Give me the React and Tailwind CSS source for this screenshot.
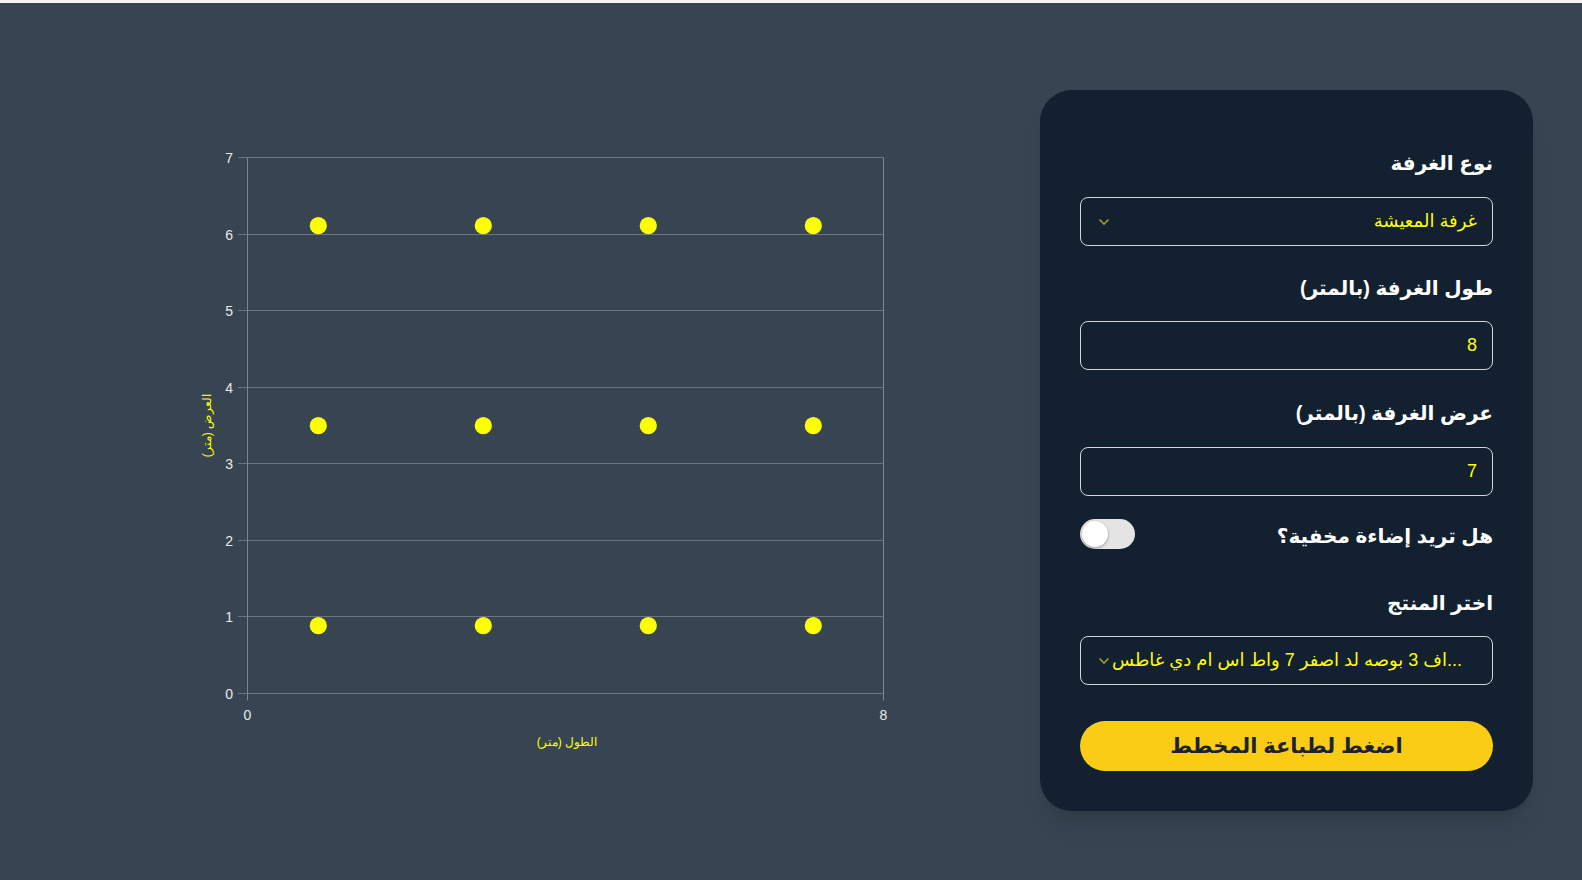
import React from "react";

const plot = { left: 67.5, right: 703.5, top: 27.5, bottom: 563.5 };
const yTicks = [0, 1, 2, 3, 4, 5, 6, 7];
const dotXs = [138.3, 303.3, 468.3, 633.3];
const dotYs = [95.7, 295.7, 495.7];

function yFor(v) {
  return Math.round(plot.bottom - (v * (plot.bottom - plot.top)) / 7 - 0.5) + 0.5;
}

function RoomChart() {
  return (
    <svg width="720" height="640" viewBox="0 0 720 640" className="block shrink-0" style={{ fontFamily: '"Liberation Sans", Arial, sans-serif' }}>
      {/* horizontal grid + y ticks */}
      {yTicks.map(v => (
        <g key={v}>
          <line x1={58} x2={plot.right} y1={yFor(v)} y2={yFor(v)} stroke="#6b7581" strokeWidth="1" />
          <text x={53} y={yFor(v)} textAnchor="end" dominantBaseline="central" fontSize="14" fill="#e8eaed">{v}</text>
        </g>
      ))}
      {/* axes */}
      <line x1={plot.left} x2={plot.left} y1={plot.top} y2={plot.bottom + 7} stroke="#7d868f" strokeWidth="1" />
      <line x1={plot.right} x2={plot.right} y1={plot.top} y2={plot.bottom + 7} stroke="#7d868f" strokeWidth="1" />
      <text x={plot.left} y={585} textAnchor="middle" dominantBaseline="central" fontSize="14" fill="#e8eaed">0</text>
      <text x={plot.right} y={585} textAnchor="middle" dominantBaseline="central" fontSize="14" fill="#e8eaed">8</text>

      {/* axis titles */}
      <text x={387} y={612} textAnchor="middle" dominantBaseline="central" fontSize="12" fill="#ffff00">الطول (متر)</text>
      <text x={27} y={295.5} textAnchor="middle" dominantBaseline="central" fontSize="12" fill="#ffff00" transform="rotate(-90 27 295.5)">العرض (متر)</text>

      {/* light points */}
      {dotYs.map(y => dotXs.map(x => (
        <circle key={`${x}-${y}`} cx={x} cy={y} r="8.6" fill="#ffff00" />
      )))}
    </svg>
  );
}

function Chevron() {
  return (
    <svg width="12" height="8" viewBox="0 0 12 8" className="shrink-0">
      <path d="M1.5 1.5 L6 6 L10.5 1.5" fill="none" stroke="#9aa22c" strokeWidth="1.6" />
    </svg>
  );
}

function Label({ children, className = "" }) {
  return <div className={`text-[20px] leading-7 font-bold text-white ${className}`}>{children}</div>;
}

export default function App() {
  return (
    <div dir="ltr" className="h-[880px] flex flex-col bg-[#374552]" style={{ fontFamily: '"Liberation Sans", "DejaVu Sans", sans-serif' }}>
      <div className="h-[3px] bg-[#f3f3f3] shrink-0" />

      <div className="flex-1 flex items-start">
        <div className="ml-[180px] mt-[127px]">
          <RoomChart />
        </div>

        {/* settings card */}
        <div dir="rtl" className="ml-[140px] mt-[87px] w-[493px] rounded-[32px] bg-[#12202f] shadow-xl px-10 pt-[59px] pb-10">
          <Label>نوع الغرفة</Label>
          <div className="mt-5 h-[49px] rounded-lg border border-[#d4d6d9] flex items-center justify-between pr-[15px] pl-[17px]">
            <span className="text-[18px] text-[#ffff00]">غرفة المعيشة</span>
            <Chevron />
          </div>

          <Label className="mt-7">طول الغرفة (بالمتر)</Label>
          <div className="mt-[19px] h-[49px] rounded-lg border border-[#d4d6d9] flex items-center pr-[15px]">
            <span className="text-[18px] text-[#ffff00]">8</span>
          </div>

          <Label className="mt-[29px]">عرض الغرفة (بالمتر)</Label>
          <div className="mt-5 h-[49px] rounded-lg border border-[#d4d6d9] flex items-center pr-[15px]">
            <span className="text-[18px] text-[#ffff00]">7</span>
          </div>

          <div className="mt-[23px] h-[30px] flex items-center justify-between">
            <Label className="pt-1">هل تريد إضاءة مخفية؟</Label>
            <div className="w-[55px] h-[30px] rounded-full bg-[#e4e4e4] flex items-center justify-end px-[2px]">
              <div className="w-[26px] h-[26px] rounded-full bg-white shadow-[0_1px_3px_rgba(0,0,0,0.35)]" />
            </div>
          </div>

          <Label className="mt-10">اختر المنتج</Label>
          <div dir="ltr" className="mt-[19px] h-[49px] rounded-lg border border-[#d4d6d9] flex items-center pl-[17px] pr-[22px] gap-[2px]">
            <Chevron />
            <span className="whitespace-nowrap text-[18px] text-[#ffff00]">
              اف 3 بوصه لد اصفر 7 واط اس ام دي غاطس...
            </span>
          </div>

          <button className="mt-9 w-full h-[50px] rounded-full bg-[#facc15] text-[#1a2230] text-[21px] font-bold">
            اضغط لطباعة المخطط
          </button>
        </div>
      </div>
    </div>
  );
}
